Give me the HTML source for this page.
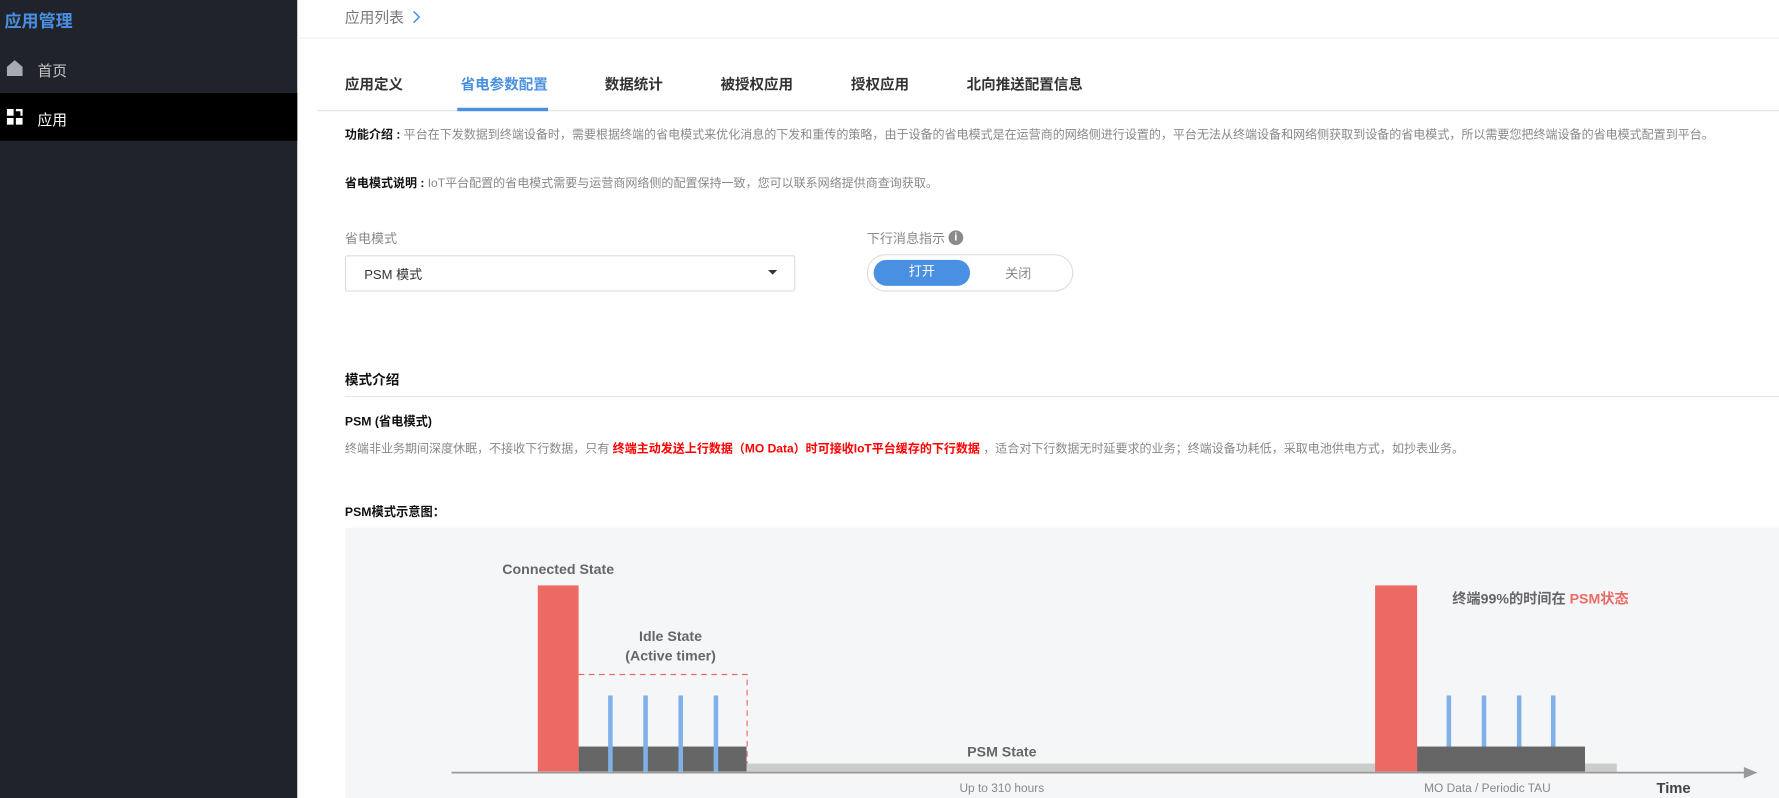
<!DOCTYPE html>
<html><head><meta charset="utf-8"><style>
*{margin:0;padding:0;box-sizing:border-box}
html,body{width:1779px;height:798px;overflow:hidden;background:#fff}
body{font-family:"Liberation Sans","Noto Sans CJK SC",sans-serif;position:relative}
#w{position:absolute;left:0;top:0;width:1568px;height:704px;transform:scale(1.13457);transform-origin:0 0}
.a{position:absolute;white-space:nowrap}
.side{position:absolute;left:0;top:0;width:262px;height:704px;background:#20232b}
.t{font-size:12.8px;color:#333;font-weight:bold;top:64px}
</style></head><body><div id="w">
<div class="side">
<div class="a" style="left:4px;top:8px;font-size:15px;color:#4a90e2;font-weight:bold">应用管理</div>
<svg class="a" style="left:6px;top:53px" width="14" height="14"><path d="M0 6L7 0L14 6V14H0Z" fill="#a8abb1"/></svg>
<div class="a" style="left:33px;top:52px;font-size:13px;color:#c4c6ca">首页</div>
<div class="a" style="left:0;top:82px;width:262px;height:42px;background:#000"></div>
<svg class="a" style="left:6px;top:96px" width="14" height="14" fill="#fff"><rect x="0" y="0" width="6" height="6"/><rect x="0" y="8" width="6" height="6"/><rect x="8" y="8" width="6" height="6"/><path d="M8 0h6v6h-2v-4h-4z"/></svg>
<div class="a" style="left:33px;top:95px;font-size:13px;color:#fff">应用</div>
</div>
<div class="a" style="left:304px;top:5px;font-size:13px;color:#777">应用列表</div>
<svg class="a" style="left:363px;top:9px" width="8" height="12"><path d="M1.5 1L6.5 6L1.5 11" fill="none" stroke="#4a90e2" stroke-width="1.3"/></svg>
<div class="a" style="left:262px;top:33px;width:1306px;height:1px;background:#eee"></div>
<div class="a t" style="left:304px">应用定义</div>
<div class="a t" style="left:406px;color:#4a90e2">省电参数配置</div>
<div class="a t" style="left:533px">数据统计</div>
<div class="a t" style="left:635px">被授权应用</div>
<div class="a t" style="left:750px">授权应用</div>
<div class="a t" style="left:852px">北向推送配置信息</div>
<div class="a" style="left:280px;top:97px;width:1288px;height:1px;background:#e4e4e4"></div>
<div class="a" style="left:403px;top:95px;width:80px;height:3px;background:#4a90e2"></div>
<div class="a" style="left:304px;top:111px;font-size:10.6px;color:#888"><b style="color:#111">功能介绍 : </b>平台在下发数据到终端设备时，需要根据终端的省电模式来优化消息的下发和重传的策略，由于设备的省电模式是在运营商的网络侧进行设置的，平台无法从终端设备和网络侧获取到设备的省电模式，所以需要您把终端设备的省电模式配置到平台。</div>
<div class="a" style="left:304px;top:154px;font-size:10.6px;color:#888"><b style="color:#111">省电模式说明 : </b>IoT平台配置的省电模式需要与运营商网络侧的配置保持一致，您可以联系网络提供商查询获取。</div>
<div class="a" style="left:304px;top:202px;font-size:11.5px;color:#888">省电模式</div>
<div class="a" style="left:304px;top:225px;width:397px;height:32px;border:1px solid #ddd;border-radius:2px"></div>
<div class="a" style="left:321px;top:234px;font-size:11.5px;color:#333">PSM 模式</div>
<div class="a" style="left:677px;top:238px;width:0;height:0;border-left:4px solid transparent;border-right:4px solid transparent;border-top:4px solid #333"></div>
<div class="a" style="left:764px;top:202px;font-size:11.5px;color:#888">下行消息指示</div>
<div class="a" style="left:836px;top:203px;width:13px;height:13px;border-radius:50%;background:#8a8a8a;color:#fff;font-size:10px;text-align:center;line-height:13px;font-weight:bold">i</div>
<div class="a" style="left:764px;top:224px;width:182px;height:33px;border:1px solid #ddd;border-radius:17px"></div>
<div class="a" style="left:770px;top:229px;width:85px;height:23px;border-radius:12px;background:#4a90e2;color:#fff;font-size:11.5px;text-align:center;line-height:23px">打开</div>
<div class="a" style="left:886px;top:233px;font-size:11.5px;color:#888">关闭</div>
<div class="a" style="left:304px;top:326px;font-size:12px;color:#111;font-weight:bold">模式介绍</div>
<div class="a" style="left:304px;top:349px;width:1264px;height:1px;background:#e4e4e4"></div>
<div class="a" style="left:304px;top:363px;font-size:10.8px;color:#111;font-weight:bold">PSM (省电模式)</div>
<div class="a" style="left:304px;top:388px;font-size:10.6px;color:#888">终端非业务期间深度休眠，不接收下行数据，只有 <b style="color:#f00">终端主动发送上行数据（MO Data）时可接收IoT平台缓存的下行数据</b> ，适合对下行数据无时延要求的业务；终端设备功耗低，采取电池供电方式，如抄表业务。</div>
<div class="a" style="left:304px;top:443px;font-size:10.8px;color:#111;font-weight:bold">PSM模式示意图：</div>
<svg class="a" style="left:304px;top:465px" width="1264" height="240" font-family="Liberation Sans,Noto Sans CJK SC,sans-serif">
<rect width="1264" height="240" fill="#f5f6f8"/>
<text x="188" y="41" text-anchor="middle" font-size="12.5" font-weight="bold" fill="#666">Connected State</text>
<rect x="170" y="51" width="36" height="164" fill="#ec6a63"/>
<text x="287" y="100" text-anchor="middle" font-size="12.5" font-weight="bold" fill="#666">Idle State</text>
<text x="287" y="117" text-anchor="middle" font-size="12.5" font-weight="bold" fill="#666">(Active timer)</text>
<path d="M206 129.5H354.5V215" fill="none" stroke="#ec6a63" stroke-dasharray="5,4"/>
<rect x="354" y="208" width="767" height="8" fill="#ccc"/>
<rect x="206" y="193" width="148" height="22" fill="#666"/>
<g fill="#7fb0e8"><rect x="232" y="148" width="4" height="67"/><rect x="263" y="148" width="4" height="67"/><rect x="294" y="148" width="4" height="67"/><rect x="325" y="148" width="4" height="67"/>
<rect x="971" y="148" width="4" height="67"/><rect x="1002" y="148" width="4" height="67"/><rect x="1033" y="148" width="4" height="67"/><rect x="1063" y="148" width="4" height="67"/></g>
<text x="579" y="202" text-anchor="middle" font-size="12.5" font-weight="bold" fill="#666">PSM State</text>
<rect x="908" y="51" width="37" height="164" fill="#ec6a63"/>
<rect x="945" y="193" width="148" height="22" fill="#666"/>
<line x1="94" y1="216" x2="1236" y2="216" stroke="#999" stroke-width="1.5"/>
<path d="M1233 211L1245 216L1233 221Z" fill="#999"/>
<text x="579" y="233" text-anchor="middle" font-size="10.5" fill="#888">Up to 310 hours</text>
<text x="1007" y="233" text-anchor="middle" font-size="10.5" fill="#888">MO Data / Periodic TAU</text>
<text x="1156" y="234" font-size="13" font-weight="bold" fill="#444">Time</text>
<text x="976" y="67" font-size="12.5" font-weight="bold" fill="#666">终端99%的时间在 <tspan fill="#ec6a63">PSM状态</tspan></text>
</svg>
</div></body></html>
